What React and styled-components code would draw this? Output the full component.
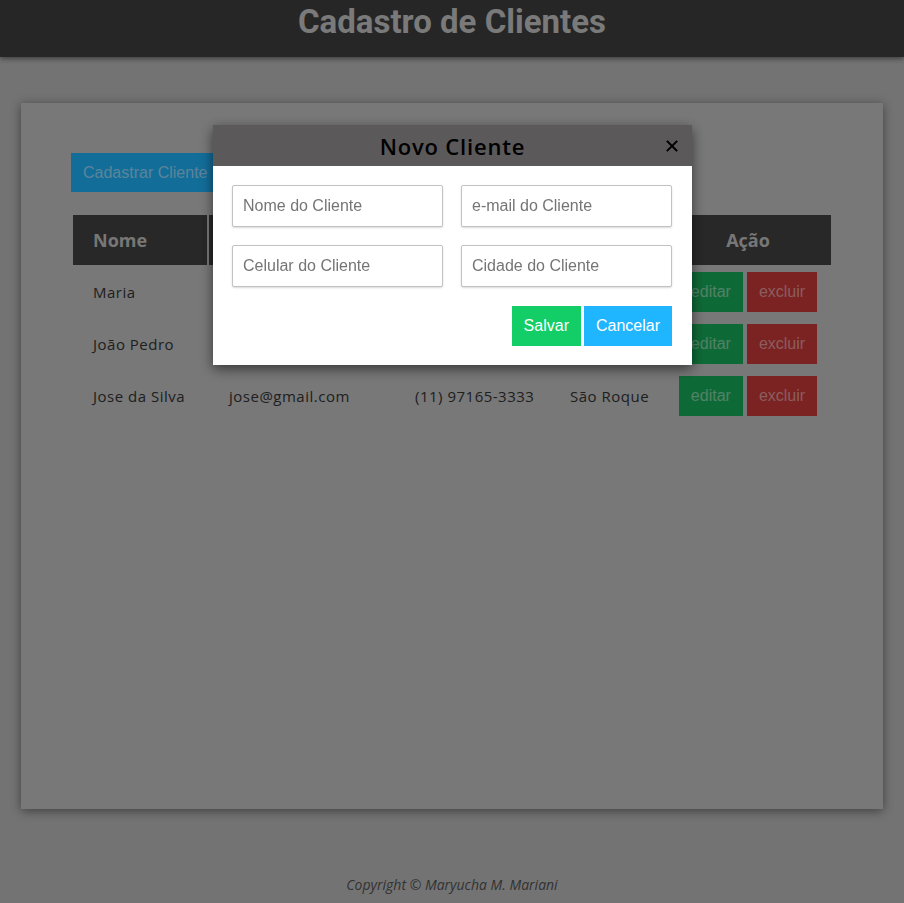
import React from "react";
import styled, { createGlobalStyle } from "styled-components";

const GlobalStyle = createGlobalStyle`
  html, body { margin: 0; padding: 0; }
  body {
    background: #c0c0c0;
    font-family: "Open Sans", "Liberation Sans", sans-serif;
    overflow: hidden;
  }
  * { box-sizing: border-box; }
`;

const Header = styled.header`
  height: 57px;
  background: #404040;
  box-shadow: 0 2px 5px rgba(0, 0, 0, 0.45);
  display: flex;
  justify-content: center;
  align-items: flex-start;
`;

const Title = styled.h1`
  margin: 0;
  font-family: Roboto, "Open Sans", sans-serif;
  font-weight: 700;
  font-size: 33px;
  line-height: 44px;
  color: #cbcbcb;
`;

const Main = styled.main`
  padding: 46px 21px 0;
`;

const Card = styled.section`
  height: 706px;
  background: #c8c8c8;
  padding: 50px;
  box-shadow: 0 2px 10px rgba(0, 0, 0, 0.45);
`;

const SolidButton = styled.button`
  border: none;
  margin: 0;
  height: ${(p) => p.$h || 40}px;
  padding: 0 ${(p) => p.$px || 12}px;
  background: ${(p) => p.$bg};
  color: ${(p) => p.$color || "#ffffff"};
  font-family: "Liberation Sans", Arial, sans-serif;
  font-size: 16px;
  cursor: pointer;
`;

const Table = styled.div`
  margin-top: 23px;
  display: grid;
  row-gap: 2px;
`;

const Row = styled.div`
  display: grid;
  grid-template-columns: 134px 184px 153px 113px 166px;
  column-gap: 2px;
  padding: 0 2px;
`;

const HeadCell = styled.div`
  height: 50px;
  background: #434343;
  color: #c6c6c6;
  font-weight: 700;
  font-size: 18px;
  display: flex;
  align-items: center;
  justify-content: ${(p) => (p.$center ? "center" : "flex-start")};
  padding-left: ${(p) => (p.$center ? 0 : 20)}px;
`;

const Cell = styled.div`
  height: 50px;
  display: flex;
  align-items: center;
  padding-left: 20px;
  font-size: 15px;
  letter-spacing: 0.5px;
  color: #343434;
  white-space: nowrap;
`;

const ActionCell = styled.div`
  height: 50px;
  display: flex;
  align-items: center;
  justify-content: center;
  gap: 4px;
`;

const Footer = styled.footer`
  margin-top: 66px;
  text-align: center;
  font-style: italic;
  font-size: 14px;
  line-height: 20px;
  color: #555;
`;

const Overlay = styled.div`
  position: fixed;
  inset: 0;
  background: rgba(0, 0, 0, 0.4);
`;

const Modal = styled.div`
  position: fixed;
  top: 125px;
  left: 213px;
  width: 479px;
  background: #ffffff;
  box-shadow: 0 4px 12px rgba(0, 0, 0, 0.55);
`;

const ModalHeader = styled.div`
  position: relative;
  height: 41px;
  background: #5b595a;
  display: flex;
  align-items: center;
  justify-content: center;
`;

const ModalTitle = styled.h2`
  margin: 0;
  font-size: 22px;
  font-weight: 600;
  letter-spacing: 0.8px;
  color: #000;
`;

const Close = styled.button`
  position: absolute;
  right: 14px;
  top: 15px;
  width: 12px;
  height: 12px;
  padding: 0;
  border: none;
  background: transparent;
  display: flex;
  cursor: pointer;
`;

const ModalBody = styled.div`
  padding: 19px 20px 19px 19px;
`;

const FormGrid = styled.div`
  display: grid;
  grid-template-columns: 211px 211px;
  column-gap: 18px;
  row-gap: 18px;
`;

const Input = styled.input`
  height: 42px;
  width: 100%;
  border: 1px solid #c2c2c2;
  border-radius: 2px;
  box-shadow: 0 1px 2px rgba(0, 0, 0, 0.15);
  padding: 0 10px;
  font-family: "Liberation Sans", Arial, sans-serif;
  font-size: 16px;
  color: #333;
  outline: none;
  &::placeholder { color: #757575; }
`;

const Actions = styled.div`
  margin-top: 19px;
  display: flex;
  justify-content: flex-end;
  gap: 3px;
`;

const clients = [
  { nome: "Maria", email: "maria@gmail.com", celular: "(11) 98888-1111", cidade: "São Paulo" },
  { nome: "João Pedro", email: "joao@gmail.com", celular: "(11) 97777-2222", cidade: "Sorocaba" },
  { nome: "Jose da Silva", email: "jose@gmail.com", celular: "(11) 97165-3333", cidade: "São Roque" },
];

export default function App() {
  return (
    <>
      <GlobalStyle />
      <Header>
        <Title>Cadastro de Clientes</Title>
      </Header>
      <Main>
        <Card>
          <SolidButton $bg="#1fb6ff" $h={39} $color="rgba(255,255,255,0.55)">
            Cadastrar Cliente
          </SolidButton>
          <Table>
            <Row>
              <HeadCell>Nome</HeadCell>
              <HeadCell>Email</HeadCell>
              <HeadCell>Celular</HeadCell>
              <HeadCell>Cidade</HeadCell>
              <HeadCell $center>Ação</HeadCell>
            </Row>
            {clients.map((c) => (
              <Row key={c.nome}>
                <Cell>{c.nome}</Cell>
                <Cell>{c.email}</Cell>
                <Cell>{c.celular}</Cell>
                <Cell>{c.cidade}</Cell>
                <ActionCell>
                  <SolidButton $bg="#17b15a" $color="rgba(255,255,255,0.5)">
                    editar
                  </SolidButton>
                  <SolidButton $bg="#cd3a3a" $color="rgba(255,255,255,0.5)">
                    excluir
                  </SolidButton>
                </ActionCell>
              </Row>
            ))}
          </Table>
        </Card>
      </Main>
      <Footer>Copyright © Maryucha M. Mariani</Footer>
      <Overlay />
      <Modal>
        <ModalHeader>
          <ModalTitle>Novo Cliente</ModalTitle>
          <Close aria-label="Fechar">
            <svg width="12" height="12" viewBox="0 0 12 12">
              <path d="M1.5 1.5 L10.5 10.5 M10.5 1.5 L1.5 10.5" stroke="#000" strokeWidth="1.9" strokeLinecap="square" />
            </svg>
          </Close>
        </ModalHeader>
        <ModalBody>
          <FormGrid>
            <Input placeholder="Nome do Cliente" />
            <Input placeholder="e-mail do Cliente" />
            <Input placeholder="Celular do Cliente" />
            <Input placeholder="Cidade do Cliente" />
          </FormGrid>
          <Actions>
            <SolidButton $bg="#13ce66">Salvar</SolidButton>
            <SolidButton $bg="#1fb6ff">Cancelar</SolidButton>
          </Actions>
        </ModalBody>
      </Modal>
    </>
  );
}
